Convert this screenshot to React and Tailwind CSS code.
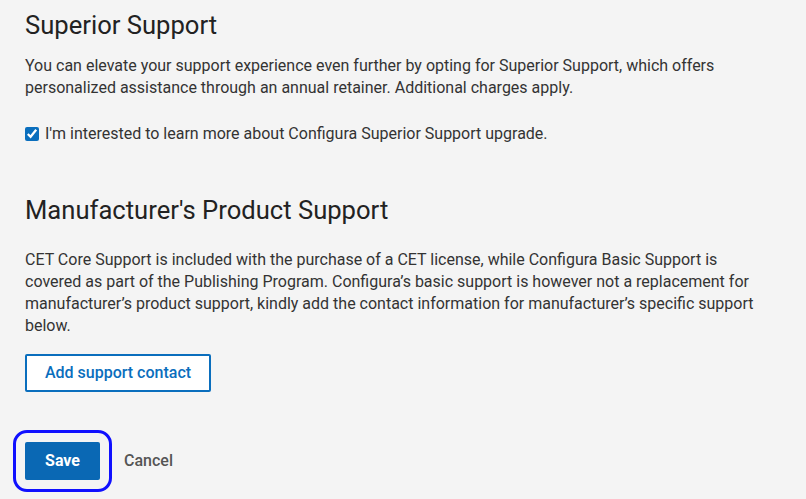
import React from "react";

export default function App() {
  return (
    <div className="min-h-[499px] bg-[#f4f4f4] px-[25px] pt-[8px] text-[#333333] font-['Roboto',sans-serif]">
      <section>
        <h2 className="text-[25.6px] leading-[34px] text-[#222222] font-normal">Superior Support</h2>
        <p className="mt-[13px] text-[16px] leading-[22px] pr-[60px]">
          You can elevate your support experience even further by opting for Superior Support, which offers
          personalized assistance through an annual retainer. Additional charges apply.
        </p>
        <label className="mt-[24px] flex items-center gap-[6px] text-[16px] leading-[22px]">
          <input type="checkbox" defaultChecked className="h-[14px] w-[14px] accent-[#0a6ebd]" />
          <span>I'm interested to learn more about Configura Superior Support upgrade.</span>
        </label>
      </section>

      <section className="mt-[48px]">
        <h2 className="text-[25.6px] leading-[34px] text-[#222222] font-normal">Manufacturer's Product Support</h2>
        <p className="mt-[22px] text-[16px] leading-[22px] pr-[16px]">
          CET Core Support is included with the purchase of a CET license, while Configura Basic Support is
          covered as part of the Publishing Program. Configura’s basic support is however not a replacement for
          manufacturer’s product support, kindly add the contact information for manufacturer’s specific support
          below.
        </p>
        <button className="mt-[17px] h-[38px] w-[186px] border-2 border-[#0a6ebd] bg-white text-[16px] font-medium text-[#0a6ebd] rounded-[2px]">
          Add support contact
        </button>
      </section>

      <div className="mt-[50px] flex items-center gap-[24px]">
        <button className="h-[38px] w-[75px] rounded-[2px] bg-[#0a68b4] text-[16px] font-bold text-white outline outline-[3px] outline-[#1010ff] outline-offset-[9px]">
          Save
        </button>
        <button className="text-[16px] font-medium text-[#555555]">Cancel</button>
      </div>
    </div>
  );
}
